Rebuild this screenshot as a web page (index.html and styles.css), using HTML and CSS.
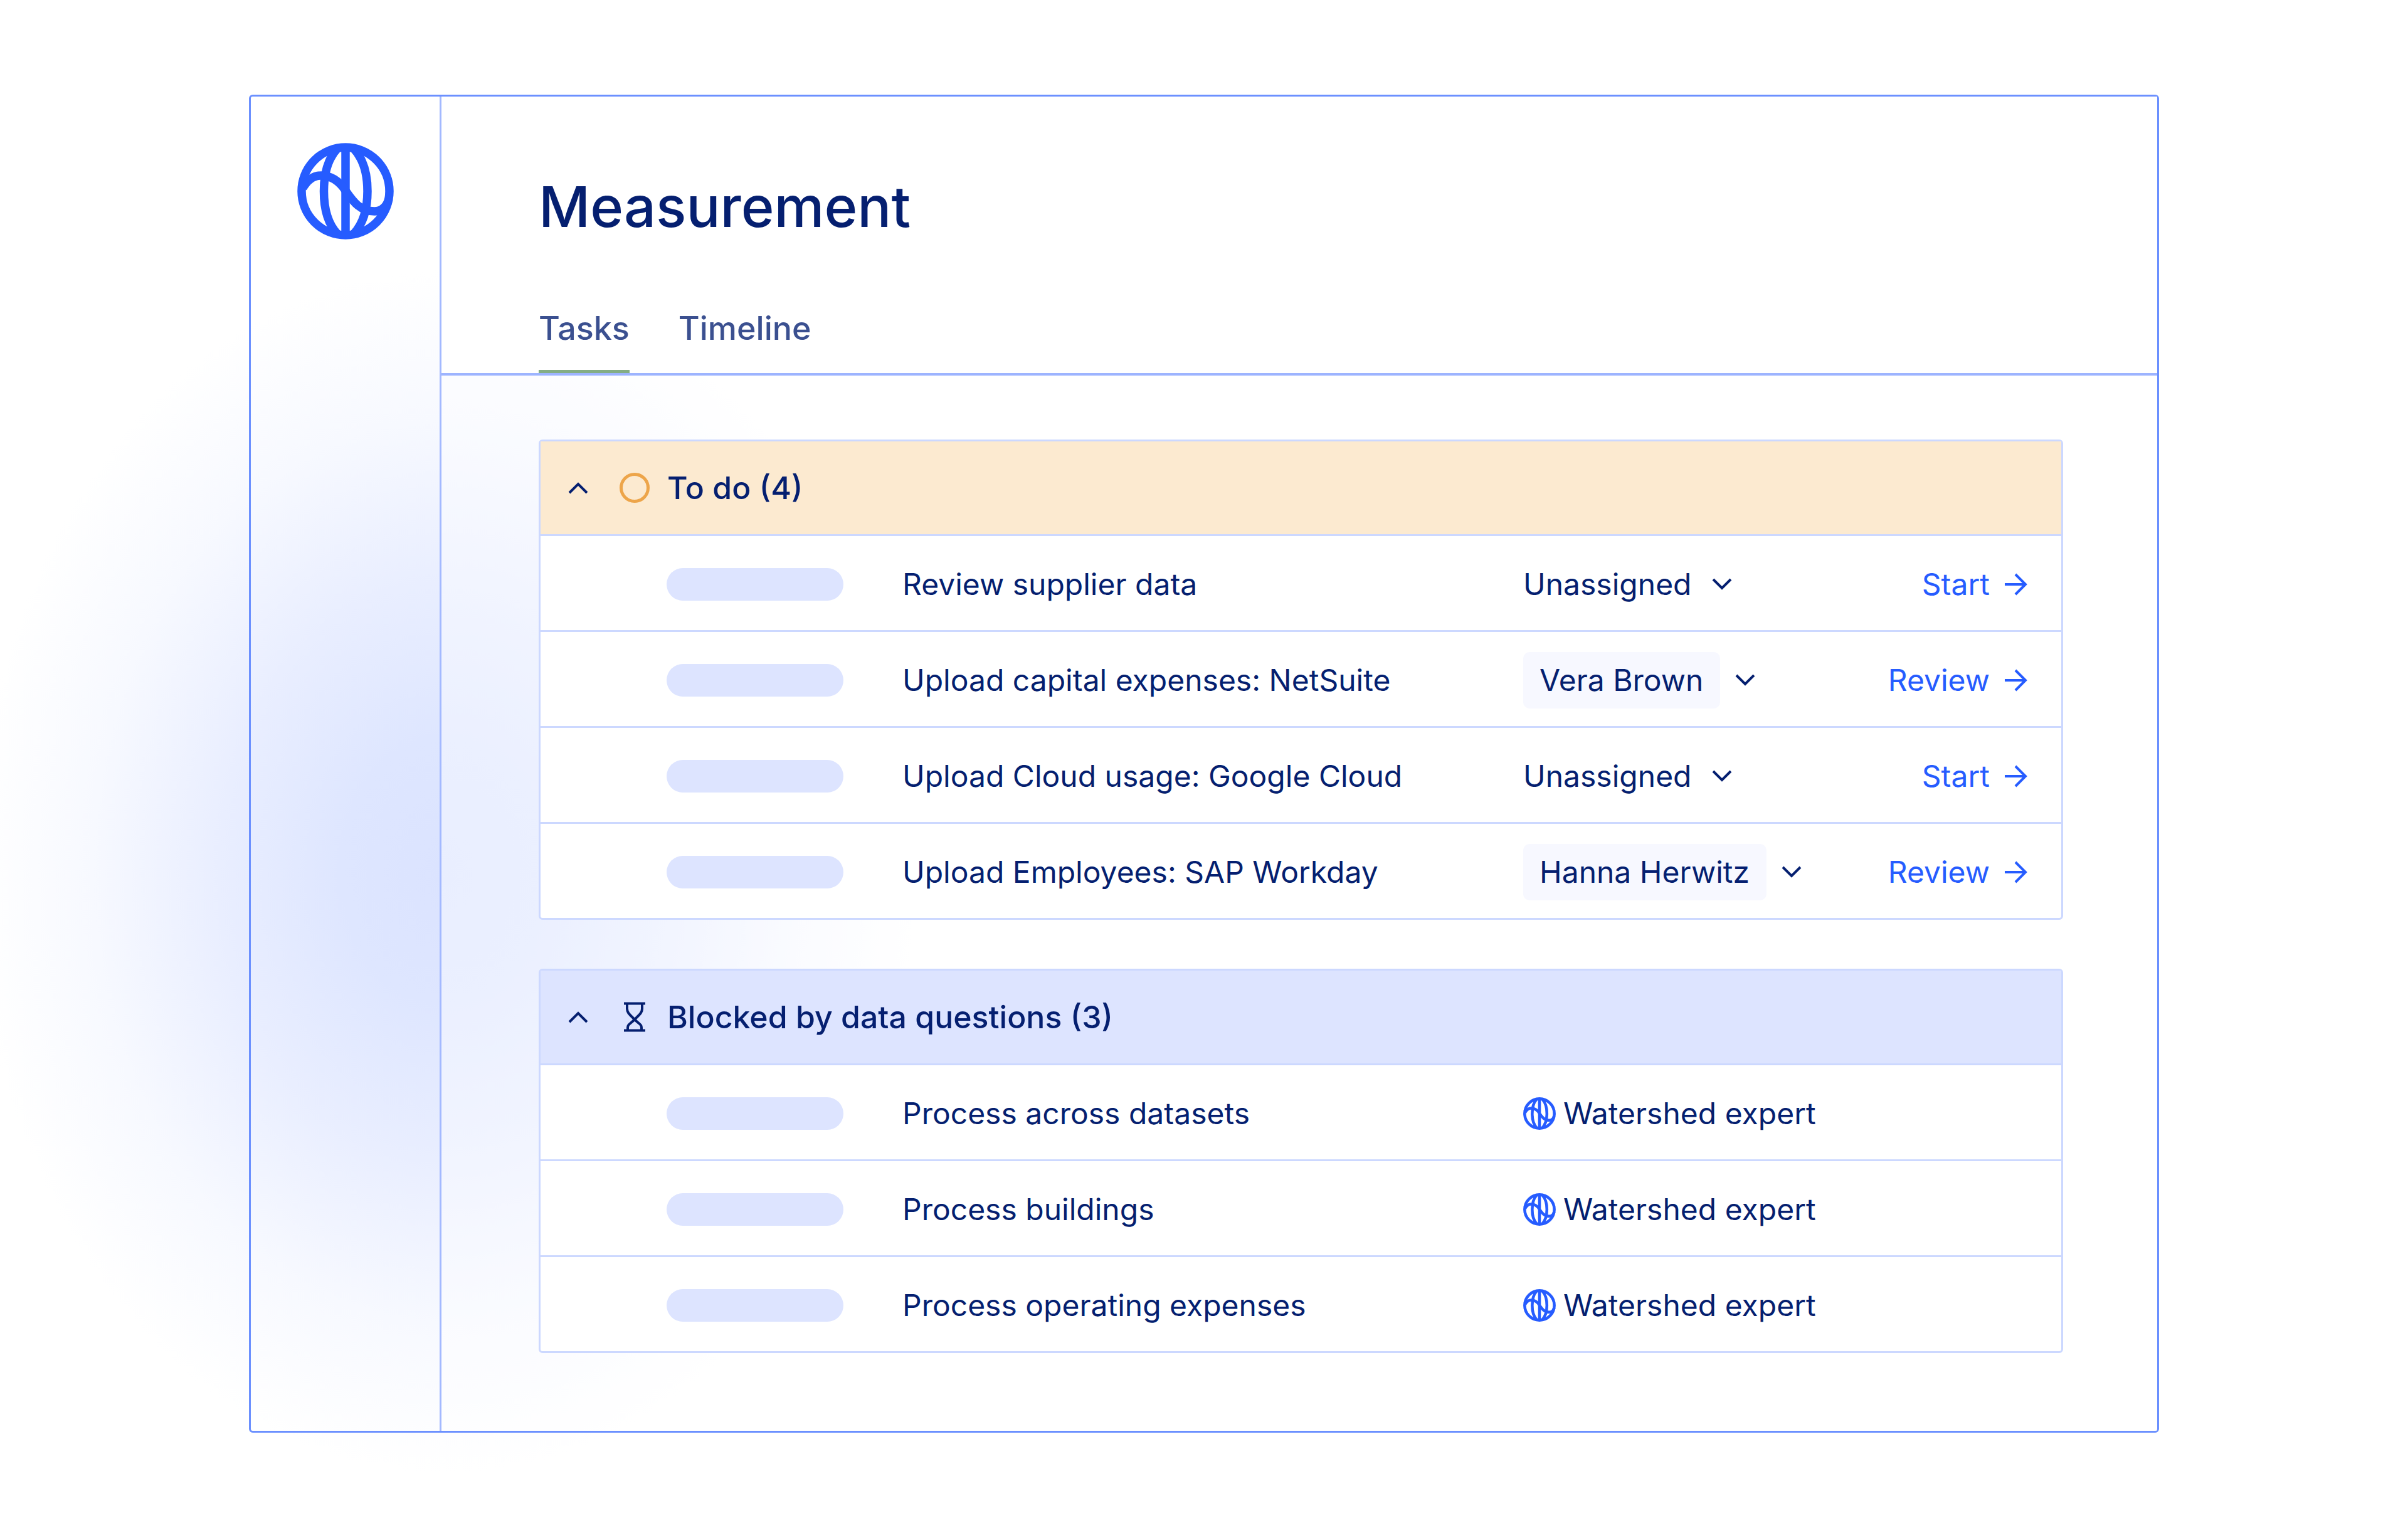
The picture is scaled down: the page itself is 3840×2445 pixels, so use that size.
FILE: index.html
```html
<!DOCTYPE html>
<html lang="en">
<head>
<meta charset="utf-8">
<title>Measurement</title>
<link rel="stylesheet" href="styles.css">
</head>
<body>
<svg class="defs" aria-hidden="true">
  <symbol id="globe" viewBox="0 0 154 154">
    <g fill="none" stroke="currentColor" stroke-width="13.5">
      <circle cx="77" cy="77" r="70"/>
      <path d="M77 7v140"/>
      <path d="M64 9C50 24 42.500 48 42.500 77S50 130 64 145"/>
      <path d="M90 9c14 15 22 39 22 68s-8 53-22 68"/>
      <path d="M9 72C17 58 27 52 38 52c16 0 29 9 39 24 13 19 24 33 46 33 13 0 20-8 23-20"/>
    </g>
  </symbol>
  <symbol id="down" viewBox="0 0 32 20">
    <path d="M2 2l14 14L30 2" fill="none" stroke="currentColor" stroke-width="4"/>
  </symbol>
  <symbol id="up" viewBox="0 0 32 20">
    <path d="M2 18L16 4l14 14" fill="none" stroke="currentColor" stroke-width="4"/>
  </symbol>
  <symbol id="arrow" viewBox="0 0 36 36">
    <path d="M0 18h33M17 2l16 16-16 16" fill="none" stroke="currentColor" stroke-width="4"/>
  </symbol>
</svg>
<div class="window">
  <aside class="sidebar">
    <a class="home" href="#" aria-label="Home"><svg class="logo"><use href="#globe"/></svg></a>
  </aside>
  <main class="main">
    <header class="header">
      <h1 class="title">Measurement</h1>
      <nav class="tabs">
        <a class="tab tab-active" href="#tasks">Tasks</a>
        <a class="tab" href="#timeline">Timeline</a>
      </nav>
    </header>
    <div class="content" id="tasks">
      <section class="group">
        <h2 class="group-head group-todo">
          <button class="toggle" aria-label="Collapse To do"><svg class="chevron"><use href="#up"/></svg></button>
          <svg class="status status-todo" viewBox="0 0 48 48"><circle cx="24" cy="24" r="21.500" fill="none" stroke="currentColor" stroke-width="5"/></svg>
          <span>To do (4)</span>
        </h2>
        <table class="tasks">
          <colgroup><col class="col-tag"><col><col class="col-owner"><col class="col-action"></colgroup>
          <tbody>
            <tr>
              <td class="tag-cell"><div class="pill"></div></td>
              <td>Review supplier data</td>
              <td><label class="owner"><select class="select" aria-label="Assignee"><option>Unassigned</option></select><svg class="chevron"><use href="#down"/></svg></label></td>
              <td class="action-cell"><a class="action" href="#">Start<svg class="arrow"><use href="#arrow"/></svg></a></td>
            </tr>
            <tr>
              <td class="tag-cell"><div class="pill"></div></td>
              <td>Upload capital expenses: NetSuite</td>
              <td><label class="owner owner-set"><select class="select chip" aria-label="Assignee"><option>Vera Brown</option></select><svg class="chevron"><use href="#down"/></svg></label></td>
              <td class="action-cell"><a class="action" href="#">Review<svg class="arrow"><use href="#arrow"/></svg></a></td>
            </tr>
            <tr>
              <td class="tag-cell"><div class="pill"></div></td>
              <td>Upload Cloud usage: Google Cloud</td>
              <td><label class="owner"><select class="select" aria-label="Assignee"><option>Unassigned</option></select><svg class="chevron"><use href="#down"/></svg></label></td>
              <td class="action-cell"><a class="action" href="#">Start<svg class="arrow"><use href="#arrow"/></svg></a></td>
            </tr>
            <tr>
              <td class="tag-cell"><div class="pill"></div></td>
              <td>Upload Employees: SAP Workday</td>
              <td><label class="owner owner-set"><select class="select chip" aria-label="Assignee"><option>Hanna Herwitz</option></select><svg class="chevron"><use href="#down"/></svg></label></td>
              <td class="action-cell"><a class="action" href="#">Review<svg class="arrow"><use href="#arrow"/></svg></a></td>
            </tr>
          </tbody>
        </table>
      </section>
      <section class="group">
        <h2 class="group-head group-blocked">
          <button class="toggle" aria-label="Collapse Blocked by data questions"><svg class="chevron"><use href="#up"/></svg></button>
          <svg class="status" viewBox="0 0 48 48"><path d="M7 2.500h34M7 45.500h34M12 3v8c0 6 4 9 12 17 8 8 11 8 11 13v4M36 3v8c0 6-4 9-12 17-8 8-11 8-11 13v4" fill="none" stroke="currentColor" stroke-width="4"/></svg>
          <span>Blocked by data questions (3)</span>
        </h2>
        <table class="tasks">
          <colgroup><col class="col-tag"><col><col class="col-owner"><col class="col-action"></colgroup>
          <tbody>
            <tr>
              <td class="tag-cell"><div class="pill"></div></td>
              <td>Process across datasets</td>
              <td colspan="2"><div class="expert"><svg class="expert-icon"><use href="#globe"/></svg>Watershed expert</div></td>
            </tr>
            <tr>
              <td class="tag-cell"><div class="pill"></div></td>
              <td>Process buildings</td>
              <td colspan="2"><div class="expert"><svg class="expert-icon"><use href="#globe"/></svg>Watershed expert</div></td>
            </tr>
            <tr>
              <td class="tag-cell"><div class="pill"></div></td>
              <td>Process operating expenses</td>
              <td colspan="2"><div class="expert"><svg class="expert-icon"><use href="#globe"/></svg>Watershed expert</div></td>
            </tr>
          </tbody>
        </table>
      </section>
    </div>
  </main>
</div>
</body>
</html>
```
FILE: styles.css
```css
* { box-sizing: border-box; }

body {
  margin: 0;
  padding: 151px 397px 158px;
  color: #051f70;
  font: 400 48px/60px Inter, "Liberation Sans", sans-serif;
  background: radial-gradient(ellipse 750px 960px at 710px 1390px, #dbe3ff 0%, #dee6ff 22%, #e9eeff 48%, #f7f9ff 75%, #fff 100%) #fff;
}

.defs { display: none; }
svg { display: block; flex: none; }
a { color: inherit; text-decoration: none; }

.window {
  display: flex;
  border: 3px solid #6b90ff;
  border-radius: 6px;
}

.sidebar {
  flex: none;
  width: 304px;
  border-right: 3px solid #a3b9ff;
}
.home {
  display: flex;
  justify-content: center;
  padding-top: 74px;
  color: #265cff;
}
.logo { width: 154px; height: 154px; }

.main { flex: 1; background: rgba(255, 255, 255, 0.4); }

.header {
  padding: 120px 155px 0;
  background: #fff;
  border-bottom: 4px solid #9db4ff;
}
.title {
  margin: 0;
  font-size: 90px;
  font-weight: 500;
  line-height: 112px;
}
.tabs {
  display: flex;
  gap: 78px;
  padding-top: 106px;
  color: #3b5090;
  font-size: 52px;
  font-weight: 500;
  line-height: 64px;
}
.tab { padding-bottom: 34px; border-bottom: 5px solid transparent; }
.tab-active { border-color: #84ad85; }

.content {
  display: flex;
  flex-direction: column;
  gap: 78px;
  padding: 102px 150px 124px 155px;
}
.group {
  border: 3px solid #ccd8ff;
  border-radius: 6px;
  background: #fff;
}
.group-head {
  display: flex;
  align-items: center;
  gap: 28px;
  height: 148px;
  margin: 0;
  padding-left: 44px;
  font-size: 50px;
  font-weight: 500;
}
.group-todo { background: #fcead0; }
.group-blocked { background: #dde4ff; }
.toggle {
  padding: 0;
  margin-right: 22px;
  border: 0;
  background: none;
  color: inherit;
}
.chevron { width: 32px; height: 20px; }
.status { width: 48px; height: 48px; }
.status-todo { color: #eda54a; }

.tasks {
  width: 100%;
  border-spacing: 0;
  table-layout: fixed;
}
.col-tag { width: 577px; }
.col-owner { width: 430px; }
.col-action { width: 428px; }
.tasks td {
  height: 153px;
  padding: 3px 0 0;
  border-top: 3px solid #ccd8ff;
}
.tasks .tag-cell { padding-left: 201px; }
.pill {
  width: 282px;
  height: 52px;
  border-radius: 26px;
  background: #dde4ff;
}

.owner { display: flex; align-items: center; gap: 32px; }
.owner-set { gap: 24px; }
.select {
  appearance: none;
  padding: 0;
  border: 0;
  background: none;
  color: inherit;
  font: inherit;
}
.chip {
  height: 90px;
  padding: 0 26px;
  border-radius: 10px;
  background: #f7f8ff;
}

.tasks .action-cell { padding-right: 54px; }
.action {
  display: flex;
  align-items: center;
  justify-content: flex-end;
  gap: 24px;
  color: #265cff;
}
.arrow { width: 36px; height: 36px; }

.expert { display: flex; align-items: center; gap: 12px; }
.expert-icon { width: 52px; height: 52px; color: #265cff; }
```
